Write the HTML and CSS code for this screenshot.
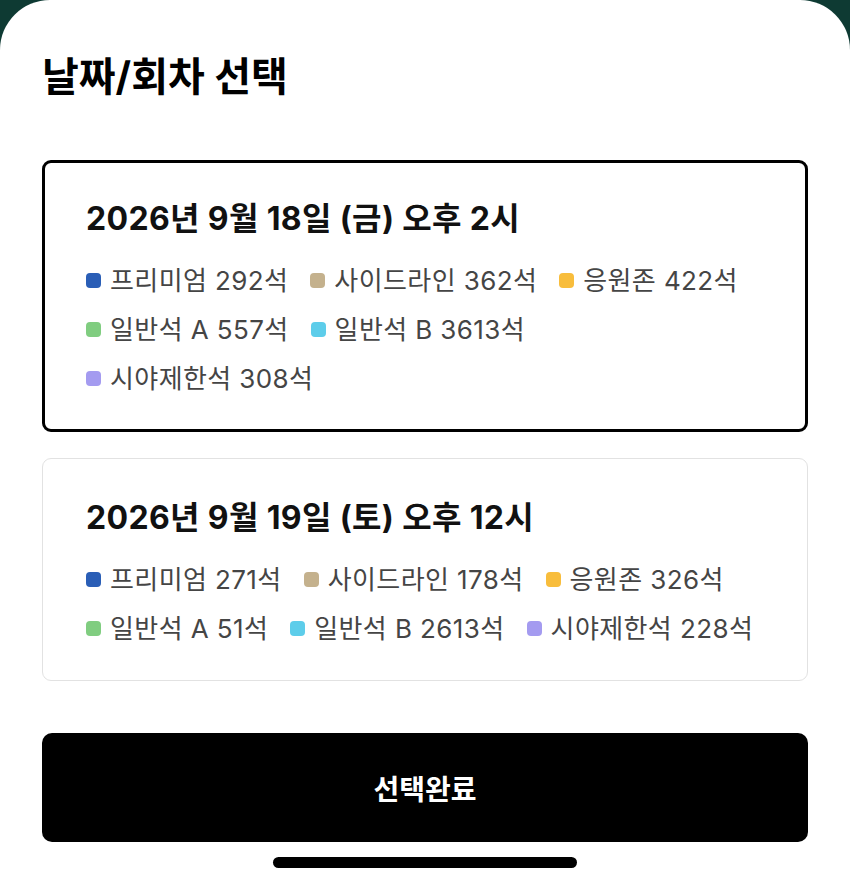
FILE: index.html
```html
<!DOCTYPE html>
<html lang="ko">
<head>
<meta charset="utf-8">
<title>날짜/회차 선택</title>
<link rel="stylesheet" href="styles.css">
</head>
<body>
<div class="sheet">
  <h1 class="title">날짜/회차 선택</h1>
  <div class="card card-selected">
    <h2 class="card-title">2026년 9월 18일 (금) 오후 2시</h2>
    <ul class="seats">
      <li class="seat"><span class="dot c-premium"></span>프리미엄 292석</li>
      <li class="seat"><span class="dot c-side"></span>사이드라인 362석</li>
      <li class="seat"><span class="dot c-cheer"></span>응원존 422석</li>
      <li class="seat"><span class="dot c-genA"></span>일반석 A 557석</li>
      <li class="seat"><span class="dot c-genB"></span>일반석 B 3613석</li>
      <li class="seat"><span class="dot c-limit"></span>시야제한석 308석</li>
    </ul>
  </div>
  <div class="card">
    <h2 class="card-title">2026년 9월 19일 (토) 오후 12시</h2>
    <ul class="seats">
      <li class="seat"><span class="dot c-premium"></span>프리미엄 271석</li>
      <li class="seat"><span class="dot c-side"></span>사이드라인 178석</li>
      <li class="seat"><span class="dot c-cheer"></span>응원존 326석</li>
      <li class="seat"><span class="dot c-genA"></span>일반석 A 51석</li>
      <li class="seat"><span class="dot c-genB"></span>일반석 B 2613석</li>
      <li class="seat"><span class="dot c-limit"></span>시야제한석 228석</li>
    </ul>
  </div>
  <button class="submit" type="button">선택완료</button>
  <div class="home-indicator"></div>
</div>
</body>
</html>
```
FILE: styles.css
```css
* { box-sizing: border-box; }
html, body { margin: 0; padding: 0; }
body {
  background: #0e3a33;
  font-family: "Inter", "Noto Sans CJK KR", sans-serif;
  color: #111;
}
.sheet {
  min-height: 884px;
  background: #fff;
  border-radius: 50px 50px 0 0;
  padding: 52px 42px 0;
  display: flex;
  flex-direction: column;
}
.title {
  margin: 0;
  font-size: 40px;
  line-height: 50px;
  font-weight: 700;
  letter-spacing: 0;
  color: #000;
}
.card {
  border: 1px solid #e2e2e2;
  border-radius: 9px;
  padding: 41px 49px 27px 43px;
  margin-top: 26px;
}
.card-selected {
  border: 3px solid #000;
  padding: 38px 47px 26px 41px;
  margin-top: 58px;
}
.card-title {
  margin: 0;
  font-size: 32px;
  line-height: 36px;
  font-weight: 700;
  color: #111;
  letter-spacing: 0.35px;
}
.seats {
  list-style: none;
  margin: 19px 0 0;
  padding: 0;
  display: flex;
  flex-wrap: wrap;
  column-gap: 22px;
}
.seat {
  display: flex;
  align-items: center;
  font-size: 26px;
  line-height: 49px;
  color: #454545;
  letter-spacing: 0.4px;
  white-space: nowrap;
}
.dot {
  width: 15px;
  height: 15px;
  border-radius: 4px;
  margin-right: 9px;
  flex: none;
}
.c-premium { background: #2a5eb6; }
.c-side { background: #c4b18d; }
.c-cheer { background: #f8bd3c; }
.c-genA { background: #80cd80; }
.c-genB { background: #5dcdea; }
.c-limit { background: #a49bf0; }
.submit {
  margin-top: 52px;
  height: 109px;
  width: 100%;
  border: 0;
  border-radius: 10px;
  background: #000;
  color: #fff;
  font-family: "Inter", "Noto Sans CJK KR", sans-serif;
  font-size: 28px;
  font-weight: 700;
  letter-spacing: 0;
}
.home-indicator {
  align-self: center;
  margin-top: 15px;
  width: 304px;
  height: 11px;
  border-radius: 6px;
  background: #000;
}
```
